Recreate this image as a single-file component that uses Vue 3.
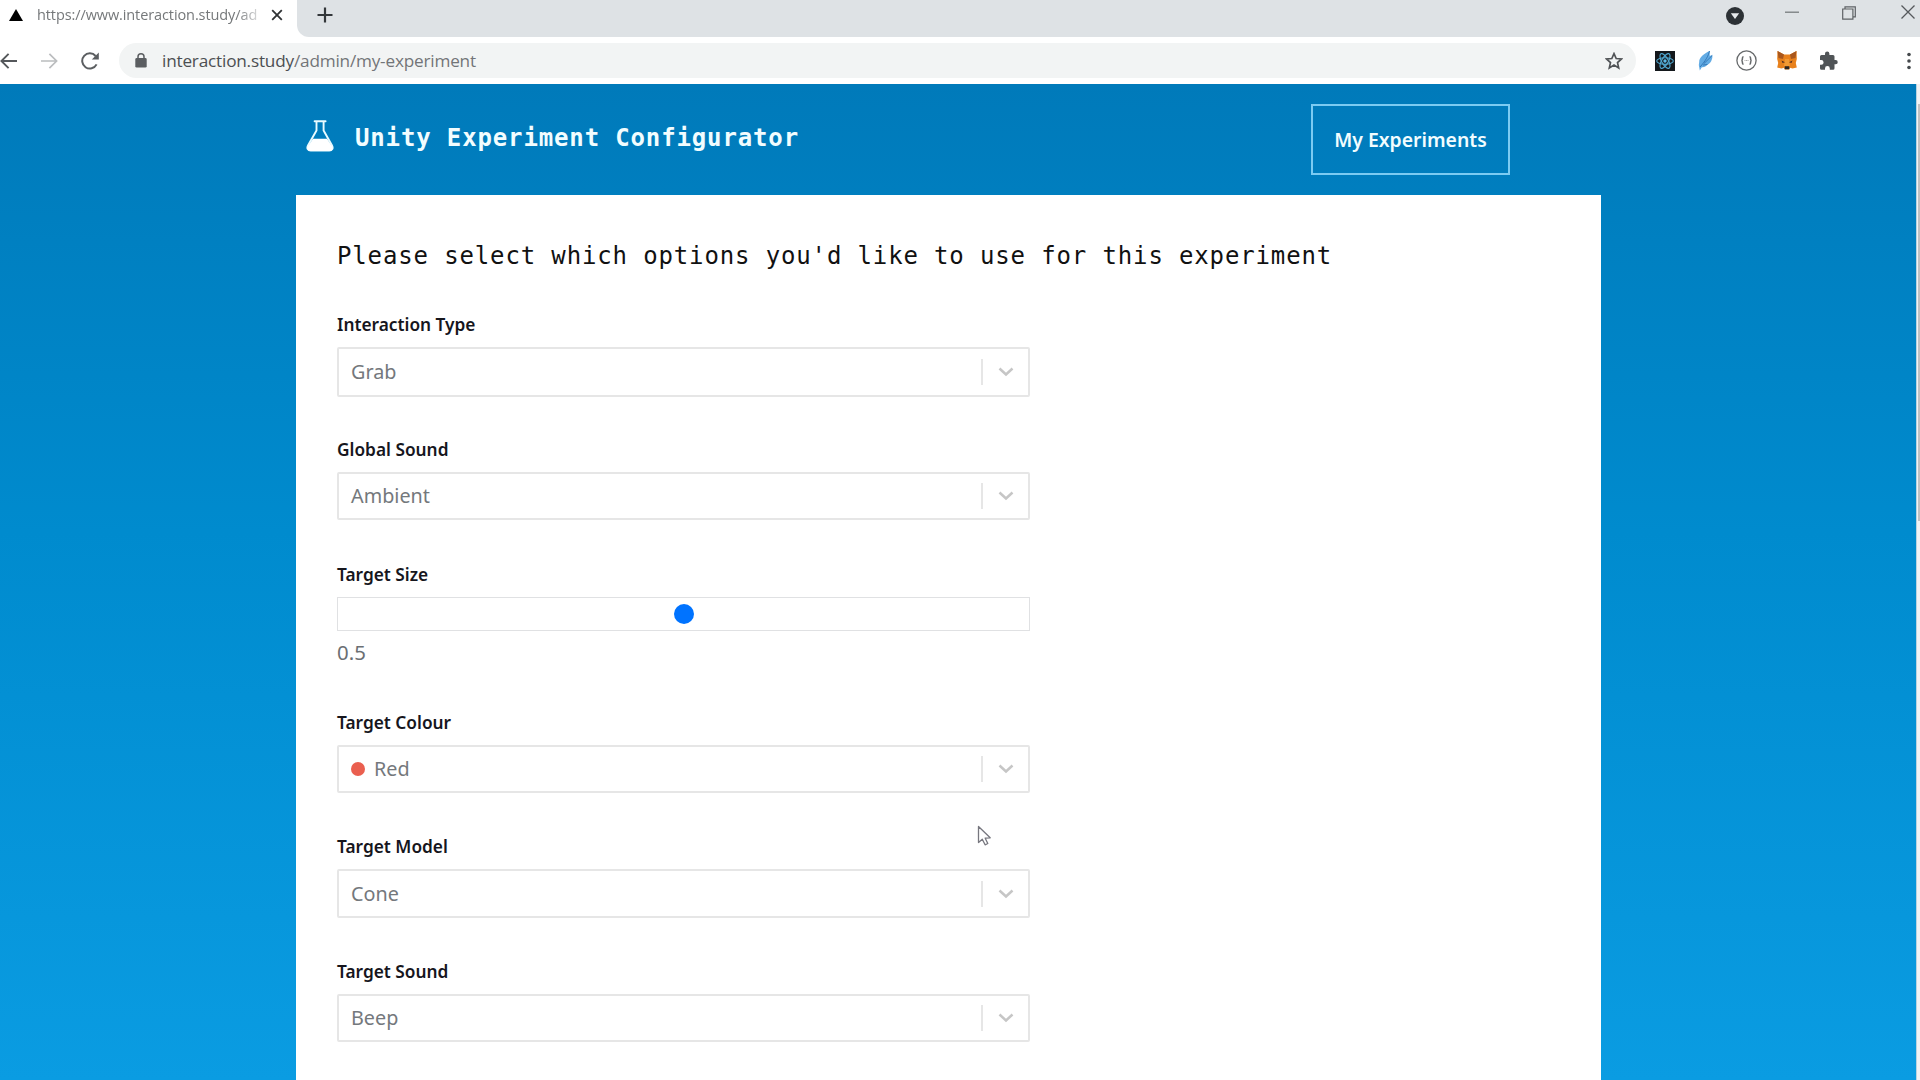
<script setup>
const fields = [
  { key: 'interaction', label: 'Interaction Type', value: 'Grab' },
  { key: 'global', label: 'Global Sound', value: 'Ambient' },
  { key: 'size', label: 'Target Size', value: '0.5', slider: true },
  { key: 'colour', label: 'Target Colour', value: 'Red', dot: true },
  { key: 'model', label: 'Target Model', value: 'Cone' },
  { key: 'sound', label: 'Target Sound', value: 'Beep' },
]
</script>

<template>
  <div class="window">
    <div class="tabstrip">
      <div class="tab">
        <svg class="favicon" width="14" height="12" viewBox="0 0 14 12"><path d="M7 0 14 12H0z" fill="#000" /></svg>
        <span class="tab-title">https://www.interaction.study/ad</span>
        <svg class="tab-close" width="12" height="12" viewBox="0 0 12 12"><path d="M1.2 1.2 10.8 10.8M10.8 1.2 1.2 10.8" stroke="#2f3234" stroke-width="1.8" /></svg>
      </div>
      <div class="strip">
        <svg class="plus" width="16" height="16" viewBox="0 0 16 16"><path d="M8 .5v15M.5 8h15" stroke="#33373a" stroke-width="2.2" /></svg>
        <div class="window-buttons">
          <svg width="18" height="18" viewBox="0 0 18 18"><circle cx="9" cy="9" r="9" fill="#2c3135" /><path d="M4.8 6.2h8.4L9 12z" fill="#e6e9eb" /></svg>
          <svg width="14" height="14" viewBox="0 0 14 14"><path d="M0 7.2h14" stroke="#777b7e" stroke-width="1.3" /></svg>
          <svg width="14" height="14" viewBox="0 0 14 14" fill="none" stroke="#5e6265" stroke-width="1.2"><path d="M.7 3h10.2v10.2H.7zM3 3V.8h10.3v10H11" /></svg>
          <svg width="14" height="14" viewBox="0 0 14 14"><path d="M.5.5 13.5 13.5M13.5.5.5 13.5" stroke="#55595c" stroke-width="1.3" /></svg>
        </div>
      </div>
    </div>

    <div class="toolbar">
      <svg class="back" width="17" height="16" viewBox="0 0 17 16" fill="none" stroke="#55585b" stroke-width="1.9"><path d="M17 8H1.6M8.6.8 1.4 8l7.2 7.2" /></svg>
      <svg class="forward" width="17" height="16" viewBox="0 0 17 16" fill="none" stroke="#bbbdbf" stroke-width="1.7"><path d="M0 8h15.4M8.4.8 15.6 8l-7.2 7.2" /></svg>
      <svg class="reload" width="19" height="18" viewBox="0 0 19 18"><path d="M15.6 12.4A7.6 7.6 0 1 1 14.6 4" fill="none" stroke="#5b5e61" stroke-width="2" /><path d="M17.8.6v7H10.8z" fill="#5b5e61" /></svg>
      <div class="omnibox">
        <svg class="lock" width="12" height="15" viewBox="0 0 12 15"><rect x=".3" y="5" width="11.4" height="9.6" rx="1.4" fill="#5b5e61" /><path d="M3 6V3.8a3 3 0 0 1 6 0V6" fill="none" stroke="#5b5e61" stroke-width="1.5" /></svg>
        <span class="url"><b>interaction.study</b>/admin/my-experiment</span>
        <svg class="star" width="18" height="18" viewBox="0 0 18 18"><path d="M9 1.6l2.2 4.9 5.3.5-4 3.6 1.2 5.3L9 13.1l-4.7 2.8 1.2-5.3-4-3.6 5.3-.5z" fill="none" stroke="#505356" stroke-width="1.7" stroke-linejoin="miter" /></svg>
      </div>
      <div class="extensions">
        <svg width="20" height="20" viewBox="0 0 20 20"><rect width="20" height="20" fill="#14181c" /><g fill="none" stroke="#4fa6cf" stroke-width="1.15"><ellipse cx="10" cy="10" rx="8.3" ry="3.3" /><ellipse cx="10" cy="10" rx="8.3" ry="3.3" transform="rotate(60 10 10)" /><ellipse cx="10" cy="10" rx="8.3" ry="3.3" transform="rotate(120 10 10)" /></g><circle cx="10" cy="10" r="1.7" fill="#5db8e4" /></svg>
        <svg width="15" height="20" viewBox="0 0 15 20"><path d="M11.500 0C6 2.500 1 6.500 1.200 11l-.4 3 1 5.500 2-3.300c2.500.3 4.200-.8 5.500-2.500 2-.7 4-3 4.500-5.200.6-1.500.8-3 .4-4.500L11.800 5z" fill="#62abe4" /><path d="M11.500 0C10.500 5 7 10.500 2 16M14.200 4.500 6 12.500M9.500 13.500 5 14" fill="none" stroke="#3579b8" stroke-width="1" /></svg>
        <svg width="21" height="21" viewBox="0 0 21 21"><circle cx="10.500" cy="10.500" r="9.600" fill="#fff" stroke="#66696b" stroke-width="1.300" /><path d="M7.500 6.800c-1.500 0-1 2.400-1.200 3-.1.400-.6.700-1 .7.400 0 .9.300 1 .7.200.6-.3 3 1.200 3M13.500 6.800c1.500 0 1 2.400 1.200 3 .1.400.6.700 1 .7-.4 0-.9.300-1 .7-.2.600.3 3-1.200 3" fill="none" stroke="#66696b" stroke-width="1.500" /><path d="M8.500 10.500h4" stroke="#aaa" stroke-width="1" stroke-dasharray="1 .5" /></svg>
        <svg width="20" height="19" viewBox="0 0 20 19"><path d="M.5 0 7 3.500h6L19.500 0l.3 8-1 4 1 4.500-4.300 1-2.500-.8L12 18.500H8L7 16.700l-2.500.8-4.300-1 1-4.500-1-4z" fill="#e8811c" /><path d="M.5 0 7 3.500 6 8 1.500 7zM19.500 0 13 3.500 14 8l4.500-1z" fill="#a9571d" /><path d="M8 8h4l1 7H7z" fill="#f29a33" /><path d="M4.500 9.500 8 11.200 5.500 12zM15.500 9.500 12 11.200l2.500.8z" fill="#533021" /><path d="M7.800 15.200h4.400l.2 3H7.600z" fill="#2b2522" /></svg>
        <svg width="19" height="19" viewBox="0 0 19 19"><path d="M15.500 9V5.500a1.500 1.500 0 0 0-1.500-1.500h-3.600V2.700a2.200 2.200 0 0 0-4.400 0V4H2.500A1.500 1.500 0 0 0 1 5.500V9h1.200a2.400 2.400 0 0 1 0 4.800H1v3.500a1.500 1.500 0 0 0 1.500 1.500H6v-1.300a2.400 2.400 0 0 1 4.800 0v1.300H14a1.500 1.500 0 0 0 1.500-1.500v-4h1.100a2.150 2.150 0 0 0 0-4.300z" fill="#505457" /></svg>
      </div>
      <svg class="kebab" width="4" height="18" viewBox="0 0 4 18" fill="#45494c"><circle cx="2" cy="2.500" r="1.800" /><circle cx="2" cy="9" r="1.800" /><circle cx="2" cy="15.500" r="1.800" /></svg>
    </div>

    <div class="viewport">
      <div class="page">
        <header class="header">
          <div class="brand">
            <svg width="28" height="32" viewBox="0 0 28 32"><path d="M8.600 1.200h11M10.500 1.500v9L2 25.500c-1.600 3 0 5 2.600 5h18.800c2.600 0 4.200-2 2.600-5L17.600 10.500v-9" fill="none" stroke="#e9fbff" stroke-width="1.900" stroke-linecap="round" /><path d="M7 18.800h14l5.300 8c1 2.400-.4 4.200-2.800 4.200h-19c-2.400 0-3.800-1.800-2.800-4.200z" fill="#fff" /></svg>
            <span class="brand-name">Unity Experiment Configurator</span>
          </div>
          <button class="nav-button"><span>My Experiments</span></button>
        </header>
        <main class="card">
          <h1>Please select which options you'd like to use for this experiment</h1>
          <section v-for="f in fields" :key="f.key" class="field" :class="f.key">
            <label><span>{{ f.label }}</span></label>
            <template v-if="f.slider">
              <div class="slider"><i class="thumb"></i></div>
              <div class="amount">{{ f.value }}</div>
            </template>
            <div v-else class="select">
              <i v-if="f.dot" class="dot"></i>
              <span class="value">{{ f.value }}</span>
              <i class="separator"></i>
              <svg class="chevron" width="16" height="10" viewBox="0 0 16 10"><path d="M1.500 1.500 8 7.500l6.500-6" fill="none" stroke="#c6c6c6" stroke-width="2.500" /></svg>
            </div>
          </section>
        </main>
      </div>
      <div class="scrollbar"><i></i></div>
    </div>
    <svg class="pointer" width="15" height="22" viewBox="0 0 15 22"><path d="M1.500 1.500v16l3.800-3.300 2.800 5.600 2.700-1.300-2.600-5.300 5-.4z" fill="#fff" stroke="#77777f" stroke-width="1.300" stroke-linejoin="round" /></svg>
  </div>
</template>

<style>
body { margin: 0; overflow: hidden; }
</style>

<style scoped>
* { box-sizing: border-box; }
.window { position: relative; width: 1920px; height: 1080px; overflow: hidden; display: flex; flex-direction: column; background: #fff; font-family: "Noto Sans", sans-serif; }
svg { display: block; flex: none; }
.tabstrip { display: flex; height: 37px; flex: none; background: #fff; }
.tab { width: 297px; display: flex; align-items: center; padding: 0 14px 8px 9px; background: #fff; }
.tab-title { margin-left: 14px; width: 222px; font-family: "Open Sans", sans-serif; font-size: 14.500px; letter-spacing: -0.1px; line-height: 20px; color: #75787a; white-space: nowrap; overflow: hidden; -webkit-mask-image: linear-gradient(90deg, #000 90%, transparent 103%); mask-image: linear-gradient(90deg, #000 90%, transparent 103%); }
.tab-close { margin-left: auto; }
.strip { flex: 1; display: flex; align-items: flex-start; background: #dee2e5; border-radius: 0 0 0 12px; padding: 7px 5px 0 20px; }
.window-buttons { margin-left: auto; display: flex; }
.window-buttons svg:nth-child(1) { margin-right: 41px; }
.window-buttons svg:nth-child(2) { margin-right: 43px; margin-top: -2px; }
.window-buttons svg:nth-child(3) { margin-right: 45px; margin-top: -1px; }
.window-buttons svg:nth-child(4) { margin-top: -2px; }
.toolbar { flex: none; height: 47px; display: flex; align-items: center; padding: 0 9px 0 0; background: #fff; }
.forward { margin-left: 24px; }
.reload { margin-left: 23px; }
.omnibox { display: flex; align-items: center; margin-left: 19px; width: 1517px; height: 35px; border-radius: 18px; background: #f2f4f4; padding: 0 13px 0 16px; }
.url { margin-left: 15px; font-family: "Open Sans", sans-serif; font-size: 17.200px; letter-spacing: -0.2px; line-height: 24px; color: #727578; white-space: nowrap; }
.url b { font-weight: 400; color: #4c4f52; }
.star { margin-left: auto; }
.extensions { display: flex; align-items: center; margin-left: 19px; }
.extensions svg:nth-child(1) { margin-right: 23px; }
.extensions svg:nth-child(2) { margin-right: 23px; }
.extensions svg:nth-child(3) { margin-right: 20px; }
.extensions svg:nth-child(4) { margin-right: 22px; }
.kebab { margin-left: auto; }
.viewport { flex: 1; display: flex; min-height: 0; }
.page { width: 1916px; background: linear-gradient(#007aba, #008bce 45%, #0a9ce2); }
.header { height: 111px; margin-left: 296px; width: 1305px; display: flex; justify-content: space-between; padding: 20px 91px 0 10px; }
.brand { display: flex; align-items: flex-start; padding-top: 16px; }
.brand-name { margin-left: 21px; margin-top: 2px; font: 700 24px/32px "DejaVu Sans Mono", monospace; letter-spacing: 0.86px; color: #f2fdff; white-space: nowrap; }
.nav-button { width: 199px; height: 71px; border: 2px solid #7ccbf2; background: transparent; color: #f2fdff; font: 600 19.400px/26px "Noto Sans", sans-serif; padding: 0; }
.card { margin-left: 296px; width: 1305px; height: 885px; background: #fff; padding: 41px 41px 0; }
h1 { margin: 0 0 37px; font: 400 24px/40px "DejaVu Sans Mono", monospace; letter-spacing: 0.86px; color: #111; white-space: nowrap; }
.field { width: 693px; height: 125px; }
.field.size { height: 148px; }
.field.colour { height: 124px; }
label { display: block; height: 34px; font: 600 17.300px/24px "Noto Sans", sans-serif; color: #16161d; white-space: nowrap; }
.select { height: 48px; display: flex; align-items: center; border: 2px solid #e6e6e6; border-radius: 2px; padding: 0 14px 0 12px; font-size: 19.800px; line-height: 26px; color: #74787c; }
.interaction .select { height: 50px; }
.model .select { height: 49px; }
.separator { width: 2px; height: 26px; background: #e6e6e6; margin-left: auto; }
.chevron { margin-left: 15px; }
.dot { width: 14px; height: 14px; border-radius: 50%; background: #ea5f4f; margin-right: 9px; }
.slider { height: 34px; border: 1px solid #e0e1e3; display: flex; align-items: center; justify-content: center; }
.thumb { width: 20px; height: 20px; margin-bottom: 1px; border-radius: 50%; background: #0073ff; }
.amount { font-size: 20.400px; line-height: 28px; margin-top: 7px; color: #6b6f73; }
.scrollbar { width: 4px; background: #f1f3f4; border-left: 1px solid #b9d3e0; padding: 20px 0 0 1px; }
.scrollbar i { display: block; height: 417px; background: #c1c1c1; }
.pointer { position: absolute; left: 977px; top: 825px; }
</style>
